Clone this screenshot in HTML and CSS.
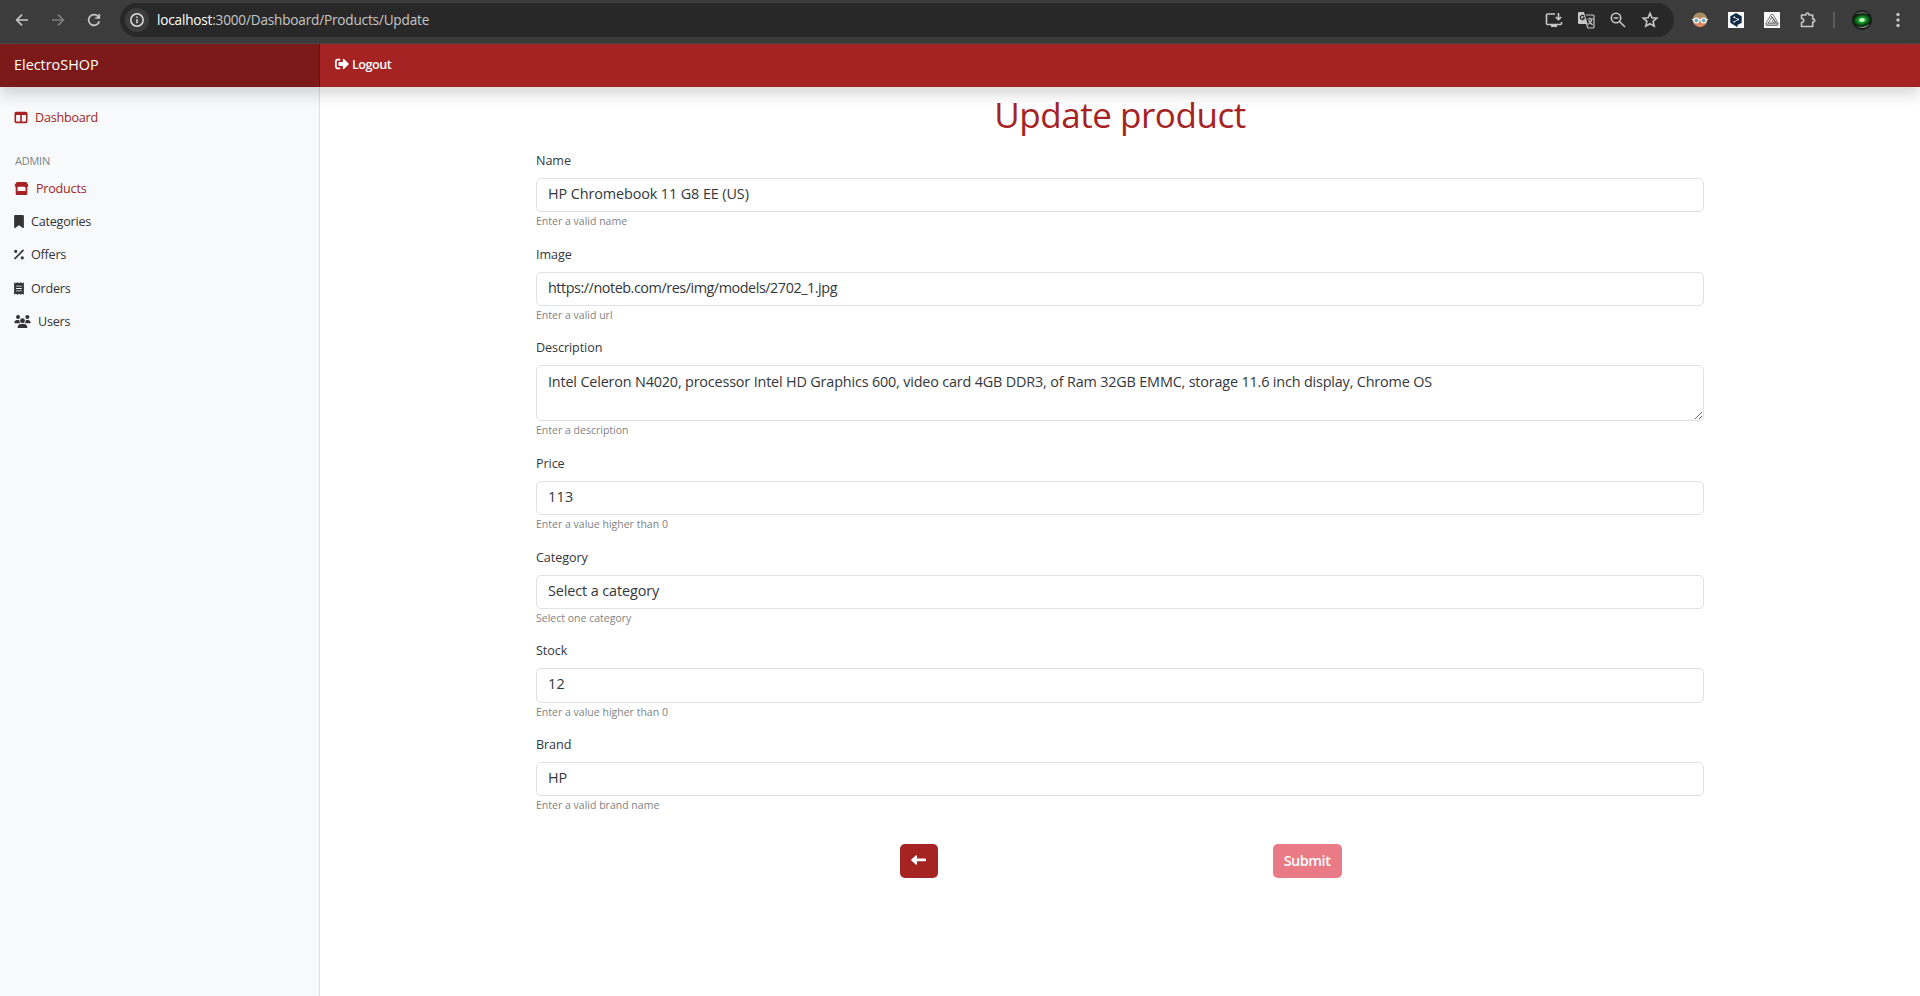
FILE: index.html
```html
<!DOCTYPE html>
<html lang="en">
<head>
<meta charset="utf-8">
<title>ElectroSHOP</title>
<link rel="stylesheet" href="styles.css">
</head>
<body>
<div class="browser">
  <svg class="nav-icon" viewBox="0 0 16 16"><path d="M14 8H3M8 2.700 2.700 8 8 13.300"/></svg>
  <svg class="nav-icon dim" viewBox="0 0 16 16"><path d="M2 8h11M8 2.700 13.300 8 8 13.300"/></svg>
  <svg class="nav-icon" viewBox="0 0 16 16"><path d="M13.300 9.200A5.400 5.400 0 1 1 12 4.300L13.200 5.500M13.300 2v4H9.200"/></svg>
  <div class="address">
    <span class="info"><svg viewBox="0 0 16 16"><circle cx="8" cy="8" r="6.200"/><path d="M8 7.300v4M8 4.500v1.500"/></svg></span>
    <span class="url"><b>localhost</b>:3000/Dashboard/Products/Update</span>
    <svg class="bar-icon" viewBox="0 0 18 18"><path d="M10 3H2.500q-1 0-1 1v8.500q0 1 1 1h13q1 0 1-1V11M13.500 2v6.500M10.800 6l2.700 2.700L16.200 6"/><path d="M6 14.800h6" stroke-width="2.500"/></svg>
    <svg class="bar-icon" viewBox="0 0 18 18"><path class="fill" d="M2 1h5l3.700 12H2q-1 0-1-1V2q0-1 1-1z"/><path d="M9 4h7q1 0 1 1v11q0 1-1 1h-5l-1.500-4M10.500 8H16M13 6.500V8M15 8q-1 4-4 5.500M11.500 9.500l4 4.500" stroke-width="1.200"/><path d="M7 5.300A2 2 0 1 0 7.300 7H5.700" stroke="#282828" stroke-width="1.300"/></svg>
    <svg class="bar-icon" viewBox="0 0 18 18"><circle cx="7" cy="7" r="4.700"/><path d="m10.500 10.500 5.500 5.500M4.700 7h4.600"/></svg>
    <svg class="bar-icon" viewBox="0 0 18 18"><path d="m9 2.300 1.900 4.500 4.900.4-3.700 3.200 1.100 4.800L9 12.700l-4.200 2.500 1.100-4.800-3.700-3.200 4.900-.4z"/></svg>
  </div>
  <div class="extensions">
    <svg viewBox="0 0 16 16"><circle cx="8" cy="8" r="7.200" fill="#d98a62"/><path d="M.8 6.500a7.300 7.300 0 0 1 14.400 0Q8 3.500.8 6.500z" fill="#a98d63"/><path d="M0 7h16v1.200H0z" fill="#e8f2f4"/><circle cx="4.300" cy="8.500" r="2.400" fill="#5fa3b0" stroke="#e8f2f4" stroke-width="1.300"/><circle cx="11.700" cy="8.500" r="2.400" fill="#5fa3b0" stroke="#e8f2f4" stroke-width="1.300"/></svg>
    <svg viewBox="0 0 16 16"><path fill="#fff" d="M0 0h16v16H0z"/><path fill="#0f2b46" d="m8 1 5.700 3.200v6.500L9.500 13v2.200L2.300 10.700V4.200z"/><path d="m6.200 5.200 4 2.300-4 2.300" fill="none" stroke="#fff" stroke-width=".8"/><path d="M5.500 4.500H7V6H5.500zM9.500 6.800H11v1.500H9.500zM5.500 9H7v1.500H5.500z" fill="#fff"/></svg>
    <svg viewBox="0 0 16 16"><path fill="#f7f7f7" d="M0 0h16v16H0z"/><path d="M7.200 2.500 1.800 11.500l.8 2h10.800l.8-2L9 2.500zM8 5l-3.700 6h7.200zM8 8l1.500 3M2 12h12M7 4l6.500 8" fill="none" stroke="#444" stroke-width=".7"/></svg>
    <svg viewBox="0 0 16 16"><path d="M1.500 3H6q0-2 1.500-2T9 3h3.700v4q2 0 2 1.500t-2 1.500v4.500H1.500v-4q2.200 0 2.200-2t-2.200-2z" fill="none" stroke="#c7c7c7" stroke-width="1.600" stroke-linejoin="round"/></svg>
  </div>
  <i class="separator"></i>
  <svg class="avatar" viewBox="0 0 20 20"><defs><radialGradient id="eye"><stop offset="0" stop-color="#fff"/><stop offset=".2" stop-color="#b8ffc0"/><stop offset=".4" stop-color="#1d9c2c"/><stop offset=".75" stop-color="#0b4d13"/><stop offset="1" stop-color="#061808"/></radialGradient></defs><circle cx="10" cy="10" r="10" fill="#171b17"/><path d="M3 4Q10-1 17 4L12 4z" fill="#555"/><path d="M4 16q8 5 14-2-6 4-14 2z" fill="#888"/><ellipse cx="10" cy="10" rx="9.500" ry="6.500" fill="url(#eye)" transform="rotate(-8 10 10)"/></svg>
  <svg class="kebab" viewBox="0 0 4 16"><circle cx="2" cy="2.500" r="1.700"/><circle cx="2" cy="8" r="1.700"/><circle cx="2" cy="13.500" r="1.700"/></svg>
</div>
<header class="topbar">
  <div class="brand">ElectroSHOP</div>
  <a class="logout"><svg viewBox="0 0 512 512"><path d="M497 273L329 441c-15 15-41 4.500-41-17v-96H152c-13.300 0-24-10.700-24-24v-96c0-13.300 10.700-24 24-24h136V88c0-21.400 25.900-32 41-17l168 168c9.300 9.400 9.300 24.600 0 34zM192 436v-40c0-6.600-5.400-12-12-12H96c-17.700 0-32-14.300-32-32V160c0-17.700 14.300-32 32-32h84c6.600 0 12-5.400 12-12V76c0-6.600-5.400-12-12-12H96c-53 0-96 43-96 96v192c0 53 43 96 96 96h84c6.600 0 12-5.400 12-12z"/></svg><span>Logout</span></a>
</header>
<div class="layout">
  <nav class="sidebar">
    <a class="item active"><svg class="w14" viewBox="0 0 512 512"><path d="M0 96C0 60.700 28.700 32 64 32H448c35.300 0 64 28.700 64 64V416c0 35.300-28.700 64-64 64H64c-35.300 0-64-28.700-64-64V96zm64 64V416H224V160H64zm384 0H288V416H448V160z"/></svg><span>Dashboard</span></a>
    <h6 class="section">ADMIN</h6>
    <a class="item active"><svg class="w15" viewBox="-.5 0 15 13"><path d="M2.200 0h9.600L13.700 2.800q.6 1.900-.9 2.300V12q0 1-1 1H2.200q-1 0-1-1V5.100Q-.3 4.700.3 2.800zM3 5.200V9h8V5.200q-1 0-1.600-.7-1 .8-2.400 0-1.400.8-2.400 0Q4 5.200 3 5.200z"/></svg><span>Products</span></a>
    <a class="item"><svg class="w10" viewBox="0 0 384 512"><path d="M0 48V487.700C0 501.100 10.900 512 24.300 512c5 0 9.900-1.500 14-4.400L192 400 345.700 507.600c4.100 2.900 9 4.400 14 4.400c13.400 0 24.300-10.900 24.300-24.300V48c0-26.500-21.500-48-48-48H48C21.500 0 0 21.500 0 48z"/></svg><span>Categories</span></a>
    <a class="item"><svg class="w10" viewBox="0 0 384 512"><path d="M374.600 118.600c12.500-12.500 12.500-32.800 0-45.300s-32.800-12.500-45.300 0l-320 320c-12.500 12.500-12.500 32.800 0 45.300s32.800 12.500 45.300 0l320-320zM128 128A64 64 0 1 0 0 128a64 64 0 1 0 128 0zM384 384a64 64 0 1 0 -128 0 64 64 0 1 0 128 0z"/></svg><span>Offers</span></a>
    <a class="item"><svg class="w10" viewBox="0 0 384 512"><path fill-rule="evenodd" d="M0 10 64 45 128 5 192 45 256 5 320 45 384 10V502L320 467 256 507 192 467 128 507 64 467 0 502zM80 144v32H304V144zM80 240v32H304V240zM80 336v32H304V336z"/></svg><span>Orders</span></a>
    <a class="item"><svg class="w17" viewBox="0 0 640 512"><path d="M144 0a80 80 0 1 1 0 160 80 80 0 0 1 0-160zM512 0a80 80 0 1 1 0 160 80 80 0 0 1 0-160zM0 298.700C0 239.800 47.800 192 106.700 192h42.700c15.900 0 31 3.500 44.600 9.700-1.300 7.200-1.900 14.700-1.900 22.300 0 38.200 16.800 72.500 43.300 96H21.300C9.600 320 0 310.400 0 298.700zM405.300 320c26.600-23.500 43.300-57.800 43.300-96 0-7.600-.7-15-1.900-22.300 13.600-6.300 28.700-9.700 44.600-9.700h42.700C592.200 192 640 239.800 640 298.700c0 11.800-9.600 21.300-21.300 21.300zM224 224a96 96 0 1 1 192 0 96 96 0 0 1-192 0zM128 485.300C128 411.700 187.700 352 261.300 352h117.300C452.300 352 512 411.700 512 485.300c0 14.700-11.900 26.700-26.700 26.700H154.700c-14.700 0-26.700-11.900-26.700-26.700z"/></svg><span>Users</span></a>
  </nav>
  <main class="content">
    <h1>Update product</h1>
    <form class="form">
      <div class="group"><label>Name</label><div class="control">HP Chromebook 11 G8 EE (US)</div><small>Enter a valid name</small></div>
      <div class="group"><label>Image</label><div class="control link">https://noteb.com/res/img/models/2702_1.jpg</div><small>Enter a valid url</small></div>
      <div class="group"><label>Description</label><textarea class="control area">Intel Celeron N4020, processor Intel HD Graphics 600, video card 4GB DDR3, of Ram 32GB EMMC, storage 11.6 inch display, Chrome OS</textarea><small>Enter a description</small></div>
      <div class="group"><label>Price</label><div class="control number">113</div><small>Enter a value higher than 0</small></div>
      <div class="group"><label>Category</label><div class="control">Select a category</div><small>Select one category</small></div>
      <div class="group"><label>Stock</label><div class="control number">12</div><small>Enter a value higher than 0</small></div>
      <div class="group"><label>Brand</label><div class="control">HP</div><small>Enter a valid brand name</small></div>
      <div class="actions">
        <button type="button" class="btn back"><svg viewBox="0 0 15 10"><path d="M.3 4.400 5 .2Q6 0 6 1v2.400h8q1 0 1 1v.9q0 1-1 1H6V9q0 1-1 .7L.3 5.500Q-.1 5 .3 4.400z"/></svg></button>
        <button type="button" class="btn submit">Submit</button>
      </div>
    </form>
  </main>
</div>
</body>
</html>
```
FILE: styles.css
```css
* { box-sizing: border-box; }
body {
  margin: 0;
  height: 996px;
  overflow: hidden;
  display: flex;
  flex-direction: column;
  background: #fff;
  color: #212529;
  font-family: "Open Sans", "Noto Sans", sans-serif;
  font-size: 14.4px;
}

/* Browser toolbar */
.browser {
  flex: 0 0 44px;
  display: flex;
  align-items: center;
  padding: 0 18px 4px 14px;
  background: #3c3c3c;
  border-bottom: 1px solid #4a4a4a;
}
.nav-icon {
  width: 16px;
  height: 16px;
  margin-right: 20px;
  fill: none;
  stroke: #c7c7c7;
  stroke-width: 1.7;
}
.nav-icon.dim { stroke: #7c7c7c; }
.address {
  width: 1554px;
  height: 34px;
  margin-left: -2px;
  padding: 0 15px 0 5px;
  display: flex;
  align-items: center;
  border-radius: 17px;
  background: #282828;
}
.info {
  width: 24px;
  height: 24px;
  display: grid;
  place-items: center;
  border-radius: 50%;
  background: #3c3c3c;
}
.info svg { width: 16px; height: 16px; fill: none; stroke: #dedede; stroke-width: 1.5; }
.url {
  flex: 1;
  margin-left: 8px;
  color: #c7c7c7;
  font-size: 13.6px;
  letter-spacing: -.19px;
}
.url b { font-weight: 400; color: #fff; }
.bar-icon {
  width: 18px;
  height: 18px;
  margin-left: 14px;
  fill: none;
  stroke: #c7c7c7;
  stroke-width: 1.6;
}
.bar-icon .fill { fill: #c7c7c7; stroke: none; }
.extensions { display: flex; gap: 20px; margin-left: 18px; }
.extensions svg { width: 16px; height: 16px; }
.separator { width: 2px; height: 16px; margin: 0 17px; background: #5c5c5c; }
.avatar { width: 20px; height: 20px; }
.kebab { width: 4px; height: 16px; margin-left: 24px; fill: #c7c7c7; }

/* Application header */
.topbar {
  position: relative;
  z-index: 1;
  flex: 0 0 43px;
  display: flex;
  background: #a52323;
  box-shadow: 0 8px 14px rgba(0, 0, 0, .15);
  color: #fff;
}
.brand {
  width: 320px;
  padding-left: 14px;
  line-height: 41px;
  border-right: 1px solid #5f1414;
  background: #7c1a1a;
}
.logout {
  display: flex;
  align-items: center;
  gap: 3px;
  padding: 0 0 3px 15px;
  font-size: 12.6px;
  font-weight: 600;
  letter-spacing: -.5px;
}
.logout svg { width: 14px; height: 14px; fill: #fff; }

/* Sidebar */
.layout { flex: 1; display: flex; }
.sidebar {
  width: 320px;
  padding: 14px 14px;
  background: #f8f9fb;
  border-right: 1px solid #dcdee0;
}
.item {
  display: flex;
  align-items: center;
  gap: 7px;
  height: 33.200px;
  color: #333;
  font-size: 12.6px;
  letter-spacing: -.23px;
}
.item.active { color: #a52323; }
.item svg { fill: currentColor; height: 13px; }
.w10 { width: 10px; }
.w14 { width: 14px; }
.w15 { width: 15px; }
.w17 { width: 17px; }
.section {
  margin: 16px 0 0;
  padding-left: 1px;
  height: 21.800px;
  line-height: 21px;
  font-size: 11px;
  font-weight: 400;
  letter-spacing: -.25px;
  color: #7b838a;
}

/* Form */
.content { flex: 1; }
h1 {
  margin: 6px 0 0;
  text-align: center;
  font-size: 35px;
  line-height: 43px;
  font-weight: 400;
  letter-spacing: -.45px;
  color: #a52323;
}
.form { width: 1168px; margin: 14px auto 0; }
.group { display: flex; flex-direction: column; margin-bottom: 12.750px; }
.group label {
  margin-bottom: 7px;
  padding-top: 1px;
  font-size: 12.6px;
  line-height: 20px;
  letter-spacing: -.08px;
  color: #33373b;
}
.control {
  height: 34.400px;
  padding: 0 11px;
  border: 1px solid #dee2e6;
  border-radius: 5px;
  background: #fff;
  color: #33373b;
  font: 14.4px/30px "Open Sans", "Noto Sans", sans-serif;
  letter-spacing: -.1px;
}
.link { letter-spacing: -.46px; }
.number { letter-spacing: .3px; }
.area {
  display: block;
  height: 56px;
  padding-top: 5px;
  line-height: 22px;
  letter-spacing: -.17px;
  overflow: hidden;
  resize: vertical;
}
.group small {
  padding-top: 1px;
  font-size: 10.5px;
  line-height: 17.600px;
  letter-spacing: .01px;
  color: #808285;
}
.actions {
  display: grid;
  grid-template-columns: 389px 388px;
  justify-content: center;
  justify-items: center;
  margin: 29px 15px 0 0;
}
.btn {
  height: 34px;
  padding: 0 0 2px;
  border: 0;
  border-radius: 5px;
  color: #fff;
  font: 600 14.4px "Open Sans", "Noto Sans", sans-serif;
  letter-spacing: -.45px;
}
.back { width: 38px; background: #a52323; }
.back svg { width: 15px; height: 10px; margin-bottom: 1px; fill: #fff; }
.submit { width: 69px; background: #ea7b86; }
```
